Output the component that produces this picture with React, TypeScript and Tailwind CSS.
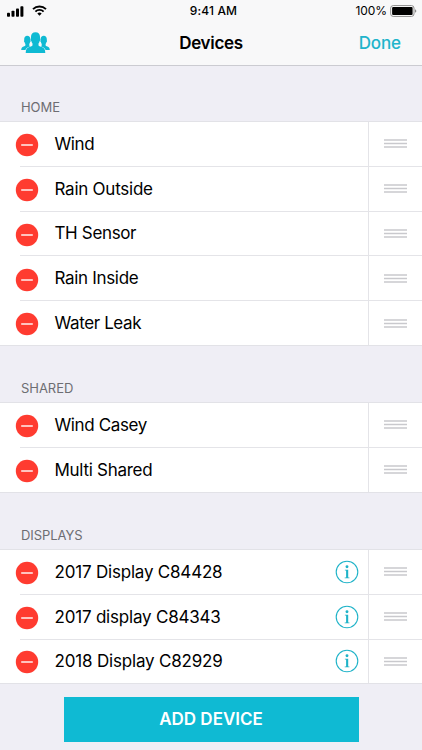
type Device = { name: string; tracking: string; info?: boolean };
type Section = { title: string; head: string; body: string; devices: Device[] };

const sections: Section[] = [
  {
    title: "HOME",
    head: "h-[55px]",
    body: "h-[225px]",
    devices: [
      { name: "Wind", tracking: "tracking-[-0.4px]" },
      { name: "Rain Outside", tracking: "tracking-[-0.25px]" },
      { name: "TH Sensor", tracking: "tracking-[-0.35px]" },
      { name: "Rain Inside", tracking: "tracking-[-0.32px]" },
      { name: "Water Leak", tracking: "tracking-[-0.38px]" },
    ],
  },
  {
    title: "SHARED",
    head: "h-[56px]",
    body: "h-[91px]",
    devices: [
      { name: "Wind Casey", tracking: "tracking-[-0.38px]" },
      { name: "Multi Shared", tracking: "tracking-[-0.28px]" },
    ],
  },
  {
    title: "DISPLAYS",
    head: "h-[56px]",
    body: "h-[135px]",
    devices: [
      { name: "2017 Display C84428", tracking: "tracking-[-0.2px]", info: true },
      { name: "2017 display C84343", tracking: "tracking-[-0.2px]", info: true },
      { name: "2018 Display C82929", tracking: "tracking-[-0.18px]", info: true },
    ],
  },
];

function Signal() {
  return (
    <svg width="17" height="11" viewBox="0 0 17 11">
      <rect x="0" y="6.7" width="3" height="4" rx=".8" />
      <rect x="4.5" y="4.8" width="3" height="5.9" rx=".8" />
      <rect x="9" y="2.6" width="3" height="8.1" rx=".8" />
      <rect x="13.4" y="0.3" width="3" height="10.4" rx=".8" />
    </svg>
  );
}

function Wifi() {
  return (
    <svg width="15" height="11" viewBox="0 0 15 11" fill="none" stroke="#000" strokeWidth="1.9" className="-mt-px">
      <path d="M1 4.1a9.3 9.3 0 0 1 13 0" />
      <path d="M3.4 6.6a5.8 5.8 0 0 1 8.2 0" />
      <path d="M7.5 10.8 5.3 8.5a3.2 3.2 0 0 1 4.4 0z" fill="#000" stroke="none" />
    </svg>
  );
}

function People() {
  return (
    <svg width="29" height="22" viewBox="0 0 29 22" fill="#0fbad3">
      <path d="M14.5.3c2.900 0 4.500 1.900 4.500 4.500v2c.6.300.4 1.900-.4 2.400-.2 1-.6 1.800-1.100 2.400v1.600c.4 1 1.700 1.300 3.300 1.900 2.300.8 3.400 2.200 3.500 5.900H4.700c.1-3.700 1.200-5.100 3.500-5.900 1.600-.6 2.900-.9 3.300-1.900v-1.600c-.5-.6-.9-1.400-1.100-2.400-.8-.5-1-2.100-.4-2.400v-2c0-2.600 1.600-4.500 4.500-4.500z" />
      <path id="side" d="M6.200 3.800c2 0 3.200 1.300 3.200 3.200v1.400c.4.200.3 1.300-.3 1.700-.2.900-.4 1.400-.8 1.800v1.600c.2.400.5.600 1 .8-2.700.9-4.200 1.600-4.900 3.800H.2c.1-2.300.8-3.100 2.400-3.700 1-.4 1.600-.6 1.800-1.200v-1.300c-.5-.5-.7-.9-.9-1.800-.6-.4-.7-1.500-.3-1.700V7c0-1.900 1.200-3.200 3-3.200z" />
      <use href="#side" transform="matrix(-1 0 0 1 29 0)" />
    </svg>
  );
}

function Remove() {
  return (
    <svg width="24" height="24" viewBox="0 0 24 24" className="mt-[2px] shrink-0">
      <circle cx="12" cy="12" r="11.200" fill="#ff3b30" />
      <path d="M6.200 12h11.600" stroke="#fff" strokeWidth="1.400" />
    </svg>
  );
}

function Info() {
  return (
    <svg width="24" height="24" viewBox="0 0 24 24" className="shrink-0">
      <circle cx="12" cy="12" r="10.800" fill="none" stroke="#1fb3c8" strokeWidth="1.100" />
      <circle cx="12" cy="6.700" r="1.450" fill="#1fb3c8" />
      <path d="M9.900 9.800h3.300v7.700h1.200v.8H9.700v-.8h1.400v-6.900H9.900z" fill="#1fb3c8" />
    </svg>
  );
}

function Row({ device, last }: { device: Device; last: boolean }) {
  return (
    <li className={`flex min-h-0 pl-[15px] ${last ? "flex-1" : "h-[44.8px] flex-none"}`}>
      <div className="flex w-[5px] items-center">
        <Remove />
      </div>
      <div className={`flex flex-1 ${last ? "" : "border-b border-[#e4e4e8]"}`}>
        <div className="flex flex-1 items-center border-r border-[#e4e4e8] pr-[9px] pl-[34.500px]">
          <span className={`flex-1 whitespace-nowrap text-[17px] leading-5 text-black ${device.tracking}`}>
            {device.name}
          </span>
          {device.info && <Info />}
        </div>
        <div className="flex w-[53px] items-center pl-[15px]">
          <svg width="23" height="9" viewBox="0 0 23 9" stroke="#c9c9cd" strokeWidth="1.500">
            <path d="M0 1h23M0 4.500h23M0 8h23" />
          </svg>
        </div>
      </div>
    </li>
  );
}

export default function App() {
  return (
    <div className="flex h-[750px] w-[422px] flex-col overflow-hidden bg-[#efeef5] font-[Inter,Roboto,sans-serif]">
      <header className="h-[66px] border-b border-[#cbcbd1] bg-[#f8f8f9]">
        <div className="grid h-[22px] grid-cols-3 items-center text-[12px] leading-4">
          <div className="flex items-center gap-[8px] pl-[6.500px]">
            <Signal />
            <Wifi />
          </div>
          <div className="pl-[5px] text-center font-medium tracking-[0.15px]">9:41 AM</div>
          <div className="flex items-center justify-end gap-[3px] pr-[5px]">
            <span className="tracking-[-0.1px]">100%</span>
            <svg width="27" height="12" viewBox="0 0 27 12">
              <rect x=".7" y=".6" width="23.300" height="10.800" rx="2.500" fill="#fff" stroke="#8b8b8b" />
              <rect x="2.100" y="2" width="20.500" height="8" rx="1" />
              <path d="M25 4.200c1.800.7 1.800 2.900 0 3.600z" fill="#8b8b8b" />
            </svg>
          </div>
        </div>
        <div className="grid h-[42px] grid-cols-3 items-center text-[17px] leading-5">
          <div className="pl-[20.500px]"><People /></div>
          <h1 className="text-center font-semibold tracking-[-0.3px]">Devices</h1>
          <button className="pr-[21px] text-right font-medium tracking-[-0.1px] text-[#20b4cb]">Done</button>
        </div>
      </header>
      {sections.map((s) => (
        <section key={s.title}>
          <h2 className={`flex items-end pb-[5px] pl-[21px] text-[13px] leading-[17px] tracking-[-0.05px] text-[#6d6d72] ${s.head}`}>{s.title}</h2>
          <ul className={`flex flex-col border-y border-[#e2e2e7] bg-white ${s.body}`}>
            {s.devices.map((d, i) => (
              <Row key={d.name} device={d} last={i === s.devices.length - 1} />
            ))}
          </ul>
        </section>
      ))}
      <footer className="flex pt-[13px] pl-[63.500px]">
        <button className="h-[44.500px] w-[295px] bg-[#0fbad3] text-[17px] font-semibold text-white">ADD DEVICE</button>
      </footer>
    </div>
  );
}
